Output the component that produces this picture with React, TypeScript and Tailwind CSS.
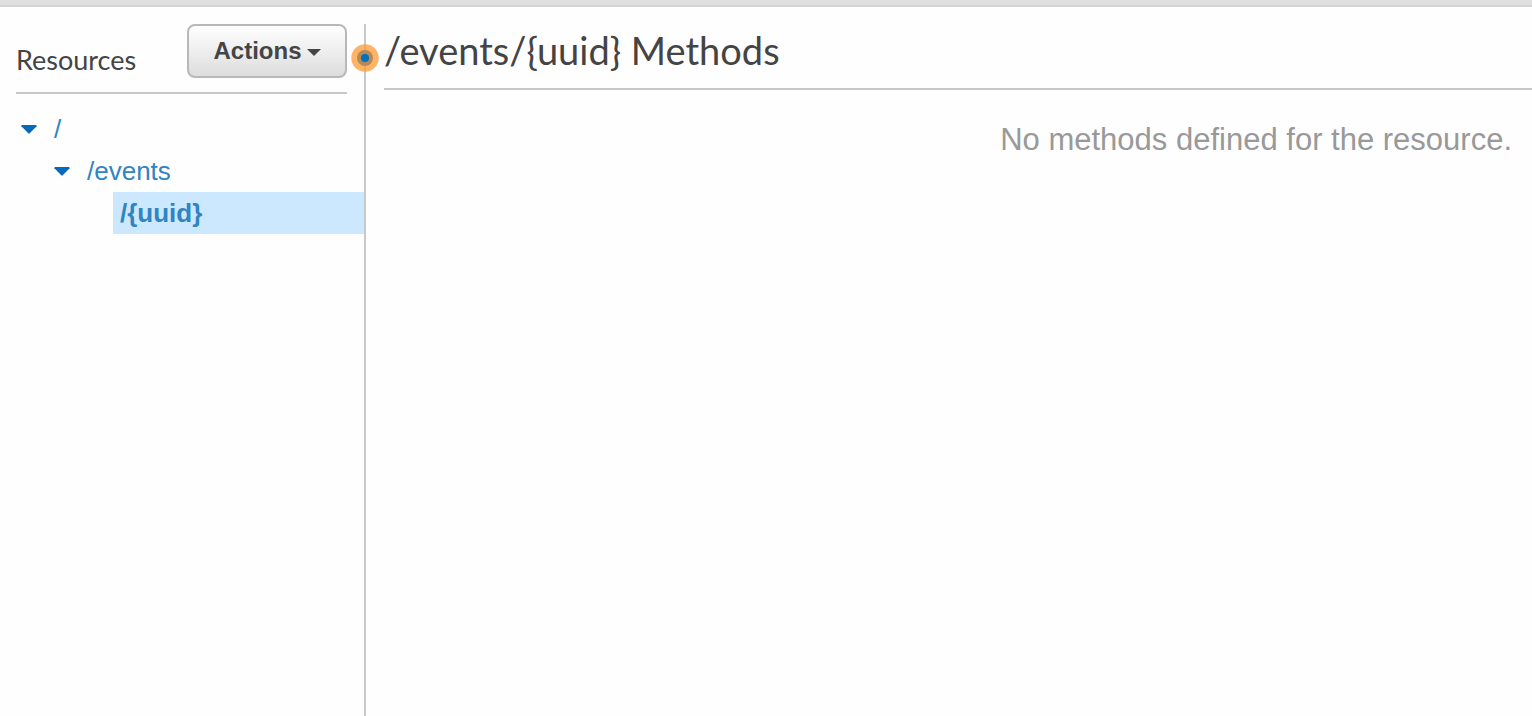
import React from "react";

function TreeCaret() {
  return (
    <svg viewBox="0 0 16 9" className="h-[9px] w-4 fill-[#0868b9]" aria-hidden="true">
      <path d="M1.2 0H14.8Q16 .2 15.6 1.2L9 8Q8 9 7 8L.4 1.2Q0 .2 1.2 0Z" />
    </svg>
  );
}

function TreeBranch({ label, children }: { label: string; children: React.ReactNode }) {
  return (
    <li>
      <div className="flex h-[42px] items-center gap-[17px] pl-[5px]">
        <button type="button" aria-label={`Collapse ${label}`} className="flex w-4 items-center">
          <TreeCaret />
        </button>
        <a href="#" className="text-[26px] leading-[42px] text-[#3184c2]">
          {label}
        </a>
      </div>
      <ul className="pl-[33px]">{children}</ul>
    </li>
  );
}

export default function App() {
  return (
    <div className="flex min-h-screen flex-col bg-[#fefefe] font-['Liberation_Sans',Arial,sans-serif] text-[#444444]">
      <div className="h-[7px] border-b-2 border-[#d4d4d4] bg-[#dfdfdf]" />
      <div className="flex grow pt-[17px]">
        <aside className="relative w-[366px] shrink-0 border-r-2 border-[#c8c8c8]">
          <header className="ml-4 mr-[17px] flex items-end justify-between border-b-2 border-[#c8c8c8] pb-[14px]">
            <h2 className="font-['Lato',sans-serif] text-[27px] leading-9">Resources</h2>
            <button
              type="button"
              className="flex h-[54px] w-40 items-center justify-center gap-[5px] rounded-lg border-2 border-[#b8b8b8] bg-linear-to-b from-white to-[#dddddd] text-2xl font-bold"
            >
              Actions
              <svg viewBox="0 0 14 7" className="mt-0.5 h-[7px] w-3.5 fill-[#444444]" aria-hidden="true">
                <path d="M0 0H14L7 7Z" />
              </svg>
            </button>
          </header>
          <nav aria-label="Resources" className="pl-4 pt-[14px]">
            <ul>
              <TreeBranch label="/">
                <TreeBranch label="/events">
                  <li className="ml-[31px] bg-[#cce8ff] pl-[7px]">
                    <a href="#" aria-current="page" className="block text-[26px] font-bold leading-[42px] text-[#3184c2]">
                      {"/{uuid}"}
                    </a>
                  </li>
                </TreeBranch>
              </TreeBranch>
            </ul>
          </nav>
          <button type="button" aria-label="Resize panel" className="absolute -right-[15px] top-5 size-7">
            <svg viewBox="0 0 28 28" className="size-7" aria-hidden="true">
              <circle cx="14" cy="14" r="13.7" fill="#ff9933" fillOpacity=".75" />
              <circle cx="14" cy="14" r="8" fill="#b48a5a" />
              <circle cx="14" cy="14" r="4" fill="#0070ba" />
            </svg>
          </button>
        </aside>
        <main className="min-w-0 grow pl-[18px]">
          <h1 className="border-b-2 border-[#c8c8c8] pb-3 font-['Lato',sans-serif] text-[38px] leading-[52px]">
            {"/events/{uuid} Methods"}
          </h1>
          <p className="pr-5 pt-[30px] text-right text-[31px] leading-10 text-[#999999]">
            No methods defined for the resource.
          </p>
        </main>
      </div>
    </div>
  );
}
